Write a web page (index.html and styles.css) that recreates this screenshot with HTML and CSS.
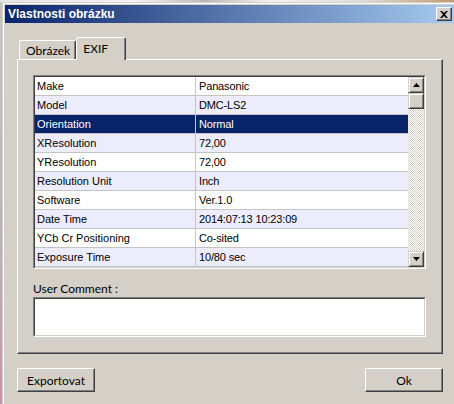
FILE: index.html
```html
<!DOCTYPE html>
<html>
<head>
<meta charset="utf-8">
<link rel="stylesheet" href="styles.css">
</head>
<body>
<div class="screen">
  <div class="strip-top"></div>
  <div class="row">
    <div class="strip-left"></div>
    <div class="dialog">
      <div class="dialog-inner">
        <div class="titlebar">
          <span class="title">Vlastnosti obrázku</span>
          <span class="close">
            <svg width="8" height="7" viewBox="0 0 8 7"><path d="M0 0h2l2 2 2-2h2L5 3.5 8 7H6L4 5 2 7H0l3-3.5z" fill="#000"/></svg>
          </span>
        </div>
        <div class="body">
          <div class="tabs">
            <div class="tab">Obrázek</div>
            <div class="tab tab-active">EXIF</div>
          </div>
          <div class="panel">
            <div class="list">
              <div class="list-inner">
                <div class="rows">
                  <div class="r"><span class="c1">Make</span><span class="c2">Panasonic</span></div>
                  <div class="r alt"><span class="c1">Model</span><span class="c2">DMC-LS2</span></div>
                  <div class="r sel"><span class="c1">Orientation</span><span class="c2">Normal</span></div>
                  <div class="r alt"><span class="c1">XResolution</span><span class="c2">72,00</span></div>
                  <div class="r"><span class="c1">YResolution</span><span class="c2">72,00</span></div>
                  <div class="r alt"><span class="c1">Resolution Unit</span><span class="c2">Inch</span></div>
                  <div class="r"><span class="c1">Software</span><span class="c2">Ver.1.0</span></div>
                  <div class="r alt"><span class="c1">Date Time</span><span class="c2">2014:07:13 10:23:09</span></div>
                  <div class="r"><span class="c1">YCb Cr Positioning</span><span class="c2">Co-sited</span></div>
                  <div class="r alt"><span class="c1">Exposure Time</span><span class="c2">10/80 sec</span></div>
                </div>
                <div class="sb">
                  <div class="sb-btn"><svg width="7" height="4" viewBox="0 0 7 4"><path d="M3.5 0L7 4H0z" fill="#000"/></svg></div>
                  <div class="thumb"></div>
                  <div class="track"></div>
                  <div class="sb-btn"><svg width="7" height="4" viewBox="0 0 7 4"><path d="M0 0h7L3.5 4z" fill="#000"/></svg></div>
                </div>
              </div>
            </div>
            <div class="label">User Comment :</div>
            <div class="comment"><div class="comment-inner"></div></div>
          </div>
          <div class="footer">
            <div class="btn">Exportovat</div>
            <div class="btn">Ok</div>
          </div>
        </div>
      </div>
    </div>
  </div>
</div>
</body>
</html>
```
FILE: styles.css
```css
* { box-sizing: border-box; }
body {
  margin: 0;
  width: 454px;
  height: 404px;
  overflow: hidden;
  background: #d4d0c8;
  font-family: "Liberation Sans", Arial, sans-serif;
  font-size: 11px;
  color: #000;
}
.screen {
  display: flex;
  flex-direction: column;
  width: 454px;
  height: 404px;
  overflow: hidden;
}
.strip-top {
  flex: none;
  height: 2px;
  background: linear-gradient(to right, #e6e6e6, #f4f4f4 30%, #b8b8b8 45%, #f2f2f2 60%, #dcdcdc 80%, #c49a6c);
}
.row { display: flex; flex: 1; }
.strip-left {
  flex: none;
  width: 2px;
  background: linear-gradient(#c4c4c4, #b8b8b8 50%, #c0a4ac 80%, #d28ea8);
}
.dialog {
  flex: none;
  width: 452px;
  display: flex;
  flex-direction: column;
  background: #d4d0c8;
  border-top: 1px solid #d4d0c8;
  border-left: 1px solid #d4d0c8;
}
.dialog-inner {
  flex: 1;
  display: flex;
  flex-direction: column;
  border-top: 1px solid #fff;
  border-left: 1px solid #fff;
  padding: 1px 0 0 1px;
}
.titlebar {
  flex: none;
  height: 18px;
  display: flex;
  align-items: center;
  justify-content: space-between;
  padding: 0 2px 0 3px;
  background: linear-gradient(to right, #0a246a, #a6caf0);
  color: #fff;
  font-weight: bold;
  font-size: 12px;
}
.close {
  width: 16px;
  height: 14px;
  display: flex;
  align-items: center;
  justify-content: center;
  background: #d4d0c8;
  border: 1px solid;
  border-color: #fff #404040 #404040 #fff;
  box-shadow: inset -1px -1px #808080;
}
.body {
  flex: 1;
  display: flex;
  flex-direction: column;
  padding: 14px 11px 12px 12px;
}
.tabs {
  flex: none;
  height: 22px;
  display: flex;
  align-items: flex-end;
  padding-left: 2px;
  font-family: Lato, "Liberation Sans", sans-serif;
  font-size: 12px;
}
.tab {
  height: 19px;
  padding: 2px 5px 0 6px;
  border: 1px solid;
  border-bottom: none;
  border-color: #fff #404040 transparent #fff;
  box-shadow: inset -1px 0 #808080;
  border-radius: 2px 2px 0 0;
  background: #d4d0c8;
}
.tab-active {
  position: relative;
  z-index: 1;
  width: 50px;
  height: 23px;
  margin-bottom: -1px;
  padding: 3px 0 0 6px;
}
.panel {
  flex: none;
  height: 295px;
  display: flex;
  flex-direction: column;
  border: 1px solid;
  border-color: #fff #404040 #404040 #fff;
  box-shadow: inset -1px -1px #808080;
  padding: 15px 16px 16px 15px;
}
.list {
  flex: none;
  height: 194px;
  display: flex;
  border: 1px solid;
  border-color: #808080 #fff #fff #808080;
}
.list-inner {
  flex: 1;
  display: flex;
  border: 1px solid;
  border-color: #404040 #d4d0c8 #d4d0c8 #404040;
  background: #fff;
}
.rows {
  flex: 1;
  display: flex;
  flex-direction: column;
}
.r {
  flex: none;
  height: 19px;
  display: grid;
  grid-template-columns: 161px 1fr;
  border-bottom: 1px solid #c4c4c4;
  line-height: 18px;
  white-space: nowrap;
}
.alt { background: #ececfc; }
.sel { background: #0a246a; color: #fff; }
.c1 {
  padding-left: 2px;
  border-right: 1px solid #c4c4c4;
}
.c2 { padding-left: 3px; letter-spacing: -0.15px; }
.sb {
  flex: none;
  width: 16px;
  display: flex;
  flex-direction: column;
  background: repeating-conic-gradient(#d4d0c8 0 25%, #fff 0 50%) 0 0 / 2px 2px;
}
.sb-btn, .thumb {
  flex: none;
  height: 16px;
  display: flex;
  align-items: center;
  justify-content: center;
  background: #d4d0c8;
  border: 1px solid;
  border-color: #d4d0c8 #404040 #404040 #d4d0c8;
  box-shadow: inset 1px 1px #fff, inset -1px -1px #808080;
}
.track { flex: 1; }
.label {
  margin-top: 12px;
  height: 16px;
  line-height: 16px;
  font-family: Lato, "Liberation Sans", sans-serif;
  font-size: 12px;
}
.comment {
  width: 393px;
  height: 40px;
  display: flex;
  border: 1px solid;
  border-color: #808080 #fff #fff #808080;
}
.comment-inner {
  flex: 1;
  background: #fff;
  border: 1px solid;
  border-color: #404040 #d4d0c8 #d4d0c8 #404040;
}
.footer {
  flex: none;
  margin-top: 14px;
  display: flex;
  justify-content: space-between;
}
.btn {
  width: 78px;
  height: 24px;
  display: flex;
  align-items: center;
  justify-content: center;
  background: #d4d0c8;
  border: 1px solid;
  border-color: #fff #404040 #404040 #fff;
  box-shadow: inset -1px -1px #808080;
  font-family: Lato, "Liberation Sans", sans-serif;
  font-size: 12px;
}
```
